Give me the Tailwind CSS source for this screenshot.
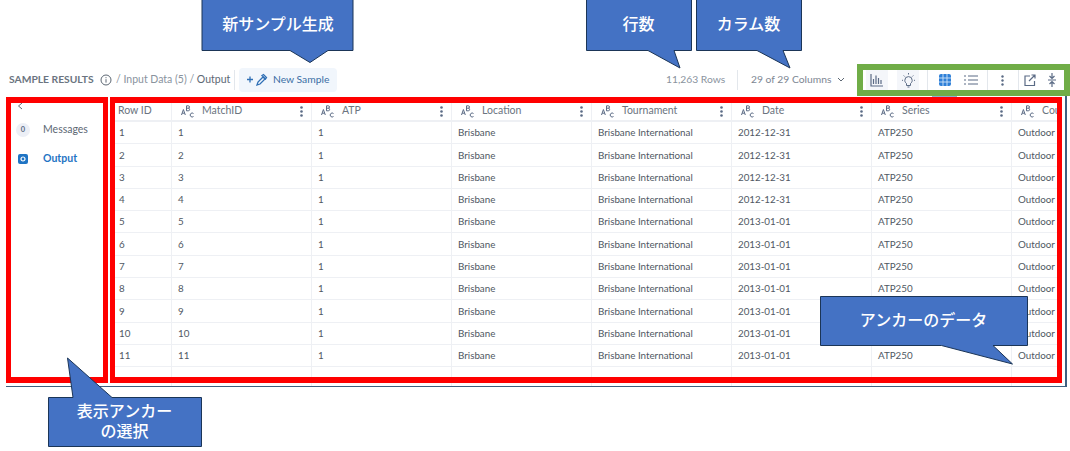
<!DOCTYPE html>
<html lang="ja">
<head>
    <meta charset="UTF-8">
    <title>Sample Results</title>
    <script src="https://cdn.jsdelivr.net/npm/@tailwindcss/browser@4"></script>
</head>
<body class="bg-white overflow-hidden">
<div class="relative w-[1070px] h-[451px] pt-[68px] overflow-hidden font-['Lato','Noto_Sans_CJK_JP',sans-serif] text-[10.3px] text-[#5c6773]">

    <!-- toolbar -->
    <div class="flex items-center h-6 pl-[9px]">
        <span class="font-bold text-[#6b7480] w-[84px] text-[10.300px] whitespace-nowrap">SAMPLE RESULTS</span>
        <svg class="ml-[7px] w-[12px] h-[12px]" viewBox="0 0 12 12" fill="none" stroke="#5c6773"><circle cx="6" cy="6" r="5"/><path d="M6 5.200v3.400M6 3.200v1"/></svg>
        <span class="ml-[4px] w-[114px] whitespace-nowrap text-[10.500px] text-[#8a939e]">/ Input Data (5) / <span class="text-[#5c6773]">Output</span></span>
        <div class="ml-1 w-px h-5 bg-[#e3e7ec]"></div>
        <button class="ml-[4px] w-[98px] h-6 bg-[#f1f6fc] rounded-sm flex items-center pl-2 text-[#3a6ea5] whitespace-nowrap">
            <svg class="w-[26px] h-[14px]" viewBox="0 0 26 14" fill="none" stroke="#2f6fb5" stroke-width="1.300"><path d="M3 3.500v6M0 6.500h6"/><path d="M10 12l1-3 5-5 2 2-5 5zM15 2.500l1.500-1 3 3-1 1.500z"/></svg>
            <span>New Sample</span>
        </button>
        <span class="ml-[329px] w-[58px] whitespace-nowrap text-[#8a939e]">11,263 Rows</span>
        <div class="ml-[13px] w-px h-5 bg-[#e3e7ec]"></div>
        <span class="ml-[13px] w-[80px] whitespace-nowrap text-[#7d8692]">29 of 29 Columns</span>
        <svg class="ml-[6px] w-[8px] h-[6px]" viewBox="0 0 8 6" fill="none" stroke="#5c6773"><path d="M1 1l3 3 3-3"/></svg>
        <!-- icon group -->
        <div class="ml-[21px] flex items-center h-[24px]">
            <div class="w-[22px] h-[20px] bg-[#f4f6fa] flex items-center justify-center">
                <svg class="w-[14px] h-[14px]" viewBox="0 0 14 14" fill="none" stroke="#5b6b85" stroke-width="1.200"><path d="M1 1v12h12M3.500 11V6M6 11V2.500M8.500 11V5M11 11V7"/></svg>
            </div>
            <div class="ml-[9px] w-[22px] h-[20px] bg-[#f4f6fa] flex items-center justify-center">
                <svg class="w-[15px] h-[15px]" viewBox="0 0 15 15" fill="none" stroke="#5b6b85"><path d="M5.500 10.500C4 9.500 3.800 8 3.800 7.300a3.700 3.700 0 0 1 7.400 0c0 .7-.2 2.200-1.700 3.200v2h-4zM6.500 14h2M7.500 0v1.500M1 7.300h1M13 7.300h1M2.700 2.500l1 1M12.300 2.500l-1 1"/></svg>
            </div>
            <div class="ml-2 w-px h-5 bg-[#e3e7ec]"></div>
            <svg class="ml-[11px] w-[12px] h-[12px]" viewBox="0 0 12 12"><rect width="12" height="12" rx="2" fill="#2f80d8"/><path d="M4 0v12M8 0v12M0 4h12M0 8h12" stroke="#cfe3f8" stroke-width=".9"/></svg>
            <svg class="ml-[13px] w-[14px] h-[12px]" viewBox="0 0 14 12" fill="none" stroke="#5b6b85"><path d="M4 2h10M4 6h10M4 10h10M0 2h2M0 6h2M0 10h2"/></svg>
            <div class="ml-[9px] w-px h-5 bg-[#e3e7ec]"></div>
            <svg class="ml-[13px] w-[3px] h-[11px]" viewBox="0 0 3 11" fill="#5b6b85"><circle cx="1.500" cy="1.500" r="1.200"/><circle cx="1.500" cy="5.500" r="1.200"/><circle cx="1.500" cy="9.500" r="1.200"/></svg>
            <div class="ml-[14px] w-px h-5 bg-[#e3e7ec]"></div>
            <svg class="ml-[5px] w-[12px] h-[12px]" viewBox="0 0 12 12" fill="none" stroke="#5b6b85" stroke-width="1.200"><path d="M6 2H1v9.500h9.500V7M5 7l6-6M7.500 1H11v3.500"/></svg>
            <svg class="ml-[11px] w-[10px] h-[14px]" viewBox="0 0 10 14" fill="none" stroke="#5b6b85" stroke-width="1.200"><path d="M5 0v5M2.500 3L5 5.500 7.500 3M1 7h8M5 14V9M2.500 11L5 8.500 7.500 11"/></svg>
        </div>
    </div>

    <!-- body -->
    <div class="flex ml-[6px] w-[1061px] h-[294px] mt-[1px] border-b border-r-2 border-[#3f6080] box-border">
        <!-- anchors -->
        <div class="w-[106px] shrink-0 pl-[10px] pt-[9px]">
            <svg class="ml-[1px] w-[6px] h-[8px]" viewBox="0 0 6 8" fill="none" stroke="#5c6773"><path d="M5 1L1.500 4 5 7"/></svg>
            <div class="flex items-center mt-[12px] h-4">
                <span class="w-[14px] h-[14px] rounded-full bg-[#eceff6] text-[7.500px] font-bold flex items-center justify-center text-[#5b6b85]">0</span>
                <span class="ml-[13px] text-[10.500px] text-[#5c6773]">Messages</span>
            </div>
            <div class="flex items-center mt-[13px] h-4 font-bold text-[#1f74c4]">
                <svg class="ml-[2px] w-[10px] h-[10px]" viewBox="0 0 10 10"><rect width="10" height="10" rx="2" fill="#1f74c4"/><circle cx="5" cy="5" r="2" fill="none" stroke="#fff" stroke-width="1.200"/></svg>
                <span class="ml-[15px] text-[10.500px]">Output</span>
            </div>
        </div>
        <!-- data table -->
        <div id="table" class="w-[946px] pt-[9px] overflow-hidden"></div>
    </div>

    <!-- annotation frames -->
    <div class="absolute left-[932px] top-[96px] w-[25px] h-px bg-[#8fb0d0]"></div>
    <div class="absolute left-[6px] top-[97px] w-[102px] h-[286px] border-y-[6px] border-x-[5px] border-[#ff0000]"></div>
    <div class="absolute left-[110px] top-[97px] w-[952px] h-[286px] border-y-[6px] border-x-[5px] border-[#ff0000]"></div>
    <div class="absolute left-[857px] top-[64px] w-[213px] h-[32px] border-[6px] border-[#70ad47]"></div>

    <!-- callouts -->
    <svg class="absolute left-0 top-0 w-[1070px] h-[451px]" viewBox="0 0 1070 451" fill="#4472c4" stroke="#1b3557">
        <path d="M202 -1V50.500H290L310 62.500L328 50.500H353V-1z"/>
        <path d="M586.500 -1V50.500H648L680 68L674 50.500H691.500V-1z"/>
        <path d="M696.500 -1V50.500H757L790 68L783 50.500H801.500V-1z"/>
        <path d="M48.500 397.500V446.500H201.500V397.500H112L67.500 358L73 397.500z"/>
        <path d="M820.500 296.500V345.500H941.500L1012.500 364L993 345.500H1027.500V296.500z"/>
    </svg>
    <div class="absolute left-[202px] top-0 w-[152px] h-[48px] flex items-center justify-center text-white text-[16px] font-medium">新サンプル生成</div>
    <div class="absolute left-[586px] top-0 w-[105px] h-[48px] flex items-center justify-center text-white text-[16px] font-medium">行数</div>
    <div class="absolute left-[696px] top-0 w-[105px] h-[48px] flex items-center justify-center text-white text-[16px] font-medium">カラム数</div>
    <div class="absolute left-[48px] top-[397px] w-[153px] h-[48px] flex items-center justify-center text-center text-white text-[16px] font-medium leading-[20px]">表示アンカー<br>の選択</div>
    <div class="absolute left-[820px] top-[296px] w-[207px] h-[48px] flex items-center justify-center text-white text-[16px] font-medium">アンカーのデータ</div>
</div>
<script>
    // Columns of the sample table
    const columns = ['MatchID', 'ATP', 'Location', 'Tournament', 'Date', 'Series', 'Court'];
    const dates = ['2012-12-31', '2012-12-31', '2012-12-31', '2012-12-31', '2013-01-01', '2013-01-01', '2013-01-01', '2013-01-01', '2013-01-01', '2013-01-01', '2013-01-01'];

    const abc = '<svg class="ml-[9px] w-[13px] h-[13px] shrink-0" viewBox="0 0 13 13" fill="none" stroke="#5b6b85" stroke-width="1"><path d="M.5 10l1.900-5.500 1.900 5.500M1.200 8.200h2.400M5.500 .8v5h1.800a1.300 1.300 0 0 0 0-2.600H5.500M7.300 3.200a1.200 1.200 0 0 0 0-2.400H5.500M12.500 8.500a2 2 0 1 0 0 3"/></svg>';
    const dots = '<svg class="absolute right-[8px] top-[4px] w-[3px] h-[11px]" viewBox="0 0 3 11" fill="#5b6b85"><circle cx="1.500" cy="1.500" r="1.300"/><circle cx="1.500" cy="5.500" r="1.300"/><circle cx="1.500" cy="9.500" r="1.300"/></svg>';

    let html = '<div class="flex h-[20px] items-center border-b-2 border-[#eef0f4] box-border w-[1100px] text-[#6b7480] text-[10.500px]">';
    html += '<div class="w-[59px] pl-[6px] shrink-0">Row ID</div>';
    columns.forEach(name => {
        html += '<div class="relative flex items-center w-[140px] h-[18px] shrink-0 border-l border-[#eef0f4]">' + abc + '<span class="ml-[8px]">' + name + '</span>' + dots + '</div>';
    });
    html += '</div>';

    const row = (cells) => {
        let out = '<div class="flex h-[22.300px] items-center border-b border-[#eef0f4] box-border w-[1100px] text-[#4f5863] text-[9.800px]">';
        out += '<div class="w-[59px] pl-[7px] shrink-0">' + cells[0] + '</div>';
        cells.slice(1).forEach(c => {
            out += '<div class="w-[140px] h-full flex items-center pl-[6px] shrink-0 border-l border-[#eef0f4]">' + c + '</div>';
        });
        return out + '</div>';
    };

    dates.forEach((d, i) => {
        const n = i + 1;
        html += row([n, n, 1, 'Brisbane', 'Brisbane International', d, 'ATP250', 'Outdoor']);
    });
    html += row(['', '', '', '', '', '', '', '']);
    document.getElementById('table').innerHTML = html;
</script>
</body>
</html>
